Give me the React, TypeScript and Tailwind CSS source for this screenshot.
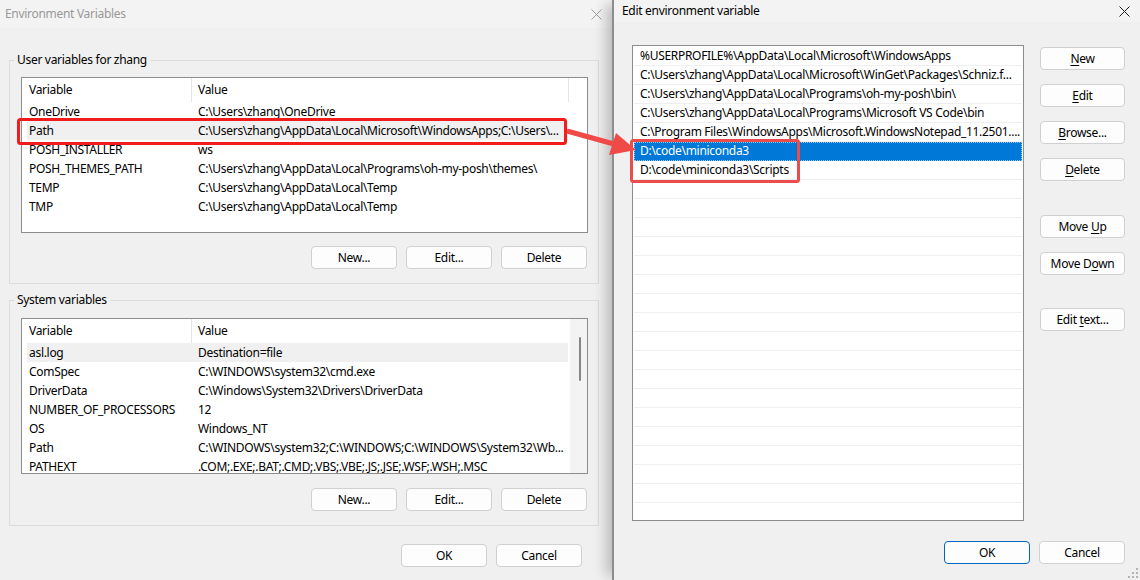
import React from "react";

type Row = [string, string];

const userVars: Row[] = [
  ["OneDrive", "C:\\Users\\zhang\\OneDrive"],
  ["Path", "C:\\Users\\zhang\\AppData\\Local\\Microsoft\\WindowsApps;C:\\Users\\..."],
  ["POSH_INSTALLER", "ws"],
  ["POSH_THEMES_PATH", "C:\\Users\\zhang\\AppData\\Local\\Programs\\oh-my-posh\\themes\\"],
  ["TEMP", "C:\\Users\\zhang\\AppData\\Local\\Temp"],
  ["TMP", "C:\\Users\\zhang\\AppData\\Local\\Temp"],
];

const sysVars: Row[] = [
  ["asl.log", "Destination=file"],
  ["ComSpec", "C:\\WINDOWS\\system32\\cmd.exe"],
  ["DriverData", "C:\\Windows\\System32\\Drivers\\DriverData"],
  ["NUMBER_OF_PROCESSORS", "12"],
  ["OS", "Windows_NT"],
  ["Path", "C:\\WINDOWS\\system32;C:\\WINDOWS;C:\\WINDOWS\\System32\\Wb..."],
  ["PATHEXT", ".COM;.EXE;.BAT;.CMD;.VBS;.VBE;.JS;.JSE;.WSF;.WSH;.MSC"],
];

const pathEntries = [
  "%USERPROFILE%\\AppData\\Local\\Microsoft\\WindowsApps",
  "C:\\Users\\zhang\\AppData\\Local\\Microsoft\\WinGet\\Packages\\Schniz.f...",
  "C:\\Users\\zhang\\AppData\\Local\\Programs\\oh-my-posh\\bin\\",
  "C:\\Users\\zhang\\AppData\\Local\\Programs\\Microsoft VS Code\\bin",
  "C:\\Program Files\\WindowsApps\\Microsoft.WindowsNotepad_11.2501....",
  "D:\\code\\miniconda3",
  "D:\\code\\miniconda3\\Scripts",
];

function CloseIcon({ color }: { color: string }) {
  return (
    <svg width="11" height="11" viewBox="0 0 11 11">
      <path d="M0.5 0.5 L10.5 10.5 M10.5 0.5 L0.5 10.5" stroke={color} strokeWidth="1" />
    </svg>
  );
}

function Btn({
  children,
  w = "w-[86px]",
  primary,
}: {
  children: React.ReactNode;
  w?: string;
  primary?: boolean;
}) {
  return (
    <div
      className={`${w} h-[23px] shrink-0 rounded-[4px] flex items-center justify-center leading-[16px] bg-[#fdfdfd] border ${
        primary ? "border-[#0067c0]" : "border-[#d0d0d0]"
      }`}
    >
      <span className="whitespace-pre">{children}</span>
    </div>
  );
}

function U({ children }: { children: React.ReactNode }) {
  return <span className="underline underline-offset-[2px]">{children}</span>;
}

function VarTable({ rows, highlight, scroll }: { rows: Row[]; highlight: number; scroll?: boolean }) {
  return (
    <div className="ml-[11px] mr-[10px] h-[156px] border border-[#8c8c8c] bg-white flex overflow-hidden">
      <div className="flex-1 min-w-0">
        <div className="h-[24px] flex ml-[5px]">
          <div className="w-[165px] pl-[2px] flex items-center border-r border-[#e5e5e5]">Variable</div>
          <div className={`w-[377px] pl-[6px] flex items-center ${scroll ? "" : "border-r border-[#e5e5e5]"}`}>
            Value
          </div>
        </div>
        {rows.map(([k, v], i) => (
          <div
            key={k + i}
            className={`h-[19px] w-[541px] ml-[5px] flex items-center whitespace-nowrap ${
              i === highlight ? "bg-[#f0f0f0]" : ""
            }`}
          >
            <div className="w-[165px] pl-[2px] overflow-hidden">{k}</div>
            <div className="flex-1 pl-[6px] overflow-hidden">{v}</div>
          </div>
        ))}
      </div>
      {scroll ? (
        <div className="w-[17px] shrink-0 bg-[#f3f3f3] flex flex-col items-center">
          <div className="w-[2px] h-[44px] mt-[18px] ml-[2px] bg-[#868686] rounded-full" />
        </div>
      ) : null}
    </div>
  );
}

function Group({ label, h, children }: { label: string; h: string; children: React.ReactNode }) {
  return (
    <div className={`${h} border border-[#dcdcdc] flex flex-col`}>
      <span className="self-start -mt-[9px] ml-[4px] px-[3px] bg-[#f0f0f0] leading-[16px]">{label}</span>
      {children}
    </div>
  );
}

function Grip() {
  const dots = [
    [8, 0],
    [4, 4],
    [8, 4],
    [0, 8],
    [4, 8],
    [8, 8],
  ];
  return (
    <svg width="10" height="10" viewBox="0 0 10 10">
      {dots.map(([x, y]) => (
        <rect key={`${x}-${y}`} x={x} y={y} width="2" height="2" fill="#b4b4b4" />
      ))}
    </svg>
  );
}

export default function App() {
  return (
    <div className="relative w-[1140px] h-[580px] overflow-hidden flex bg-[#f0f0f0] text-[12px] tracking-[-0.3px] text-black font-['Segoe_UI','Noto_Sans',sans-serif]">
      {/* Environment Variables (inactive) */}
      <div className="w-[612px] h-full shrink-0 bg-[#f0f0f0] flex flex-col">
        <div className="h-[28px] bg-[#f3f3f3] flex items-center justify-between pl-[5px] pr-[10px]">
          <span className="text-[#999999]">Environment Variables</span>
          <CloseIcon color="#a0a0a0" />
        </div>
        <div className="pl-[9px] pr-[13px] pt-[32px] flex flex-col">
          <Group label="User variables for zhang" h="h-[224px]">
            <div className="mt-[9px]">
              <VarTable rows={userVars} highlight={1} />
            </div>
            <div className="mt-[13px] mr-[11px] flex justify-end gap-[9px]">
              <Btn>New...</Btn>
              <Btn>Edit...</Btn>
              <Btn>Delete</Btn>
            </div>
          </Group>
          <div className="mt-[16px]">
            <Group label="System variables" h="h-[226px]">
              <div className="mt-[10px]">
                <VarTable rows={sysVars} highlight={0} scroll />
              </div>
              <div className="mt-[14px] mr-[11px] flex justify-end gap-[9px]">
                <Btn>New...</Btn>
                <Btn>Edit...</Btn>
                <Btn>Delete</Btn>
              </div>
            </Group>
          </div>
          <div className="mt-[18px] mr-[17px] flex justify-end gap-[9px]">
            <Btn>OK</Btn>
            <Btn>Cancel</Btn>
          </div>
        </div>
      </div>

      {/* Edit environment variable (active) */}
      <div className="relative z-10 flex-1 h-full bg-[#f0f0f0] border-l-2 border-[#8d8d8d] shadow-[-10px_0_12px_-4px_rgba(0,0,0,0.22)] flex flex-col">
        <div className="h-[22px] bg-[#f3f3f3] flex items-center justify-between pl-[8px] pr-[10px]">
          <span>Edit environment variable</span>
          <CloseIcon color="#1a1a1a" />
        </div>
        <div className="flex pl-[18px] pt-[23px]">
          <div className="w-[392px] h-[476px] border border-[#8c8c8c] bg-white px-[1px] pt-[1px] overflow-hidden">
            {Array.from({ length: 25 }).map((_, i) => {
              const text = pathEntries[i];
              const sel = i === 5;
              return (
                <div
                  key={i}
                  className={`h-[19px] pl-[6px] flex items-center whitespace-nowrap border-b ${
                    sel
                      ? "bg-[#0078d7] text-white border-[#0078d7] outline outline-1 outline-dotted outline-offset-[-1px] outline-[#9ec8ef]"
                      : "border-[#efefef]"
                  }`}
                >
                  {text ?? ""}
                </div>
              );
            })}
          </div>
          <div className="ml-[16px] mt-[2px] flex flex-col">
            <Btn w="w-[85px]">
              <U>N</U>ew
            </Btn>
            <div className="mt-[14px]">
              <Btn w="w-[85px]">
                <U>E</U>dit
              </Btn>
            </div>
            <div className="mt-[14px]">
              <Btn w="w-[85px]">
                <U>B</U>rowse...
              </Btn>
            </div>
            <div className="mt-[14px]">
              <Btn w="w-[85px]">
                <U>D</U>elete
              </Btn>
            </div>
            <div className="mt-[34px]">
              <Btn w="w-[85px]">
                {"Move "}
                <U>U</U>p
              </Btn>
            </div>
            <div className="mt-[14px]">
              <Btn w="w-[85px]">
                Move D<U>o</U>wn
              </Btn>
            </div>
            <div className="mt-[33px]">
              <Btn w="w-[85px]">
                {"Edit "}
                <U>t</U>ext...
              </Btn>
            </div>
          </div>
        </div>
        <div className="mt-[20px] pr-[15px] flex justify-end gap-[9px]">
          <Btn primary>OK</Btn>
          <Btn>Cancel</Btn>
        </div>
        <div className="mt-auto mb-[2px] mr-[2px] self-end">
          <Grip />
        </div>
      </div>

      {/* annotations */}
      <svg className="absolute inset-0 z-20 pointer-events-none" width="1140" height="580" viewBox="0 0 1140 580">
        <rect x="18.5" y="119.5" width="547" height="24" rx="2" fill="none" stroke="#f31c1c" strokeWidth="3" />
        <line x1="567" y1="131" x2="614" y2="144" stroke="#f04a48" strokeWidth="5" />
        <polygon points="636,150 609,155 616,133" fill="#f04a48" />
        <rect x="631.5" y="140.5" width="167" height="41" rx="2" fill="none" stroke="#ea4d4b" strokeWidth="3" />
      </svg>
    </div>
  );
}
